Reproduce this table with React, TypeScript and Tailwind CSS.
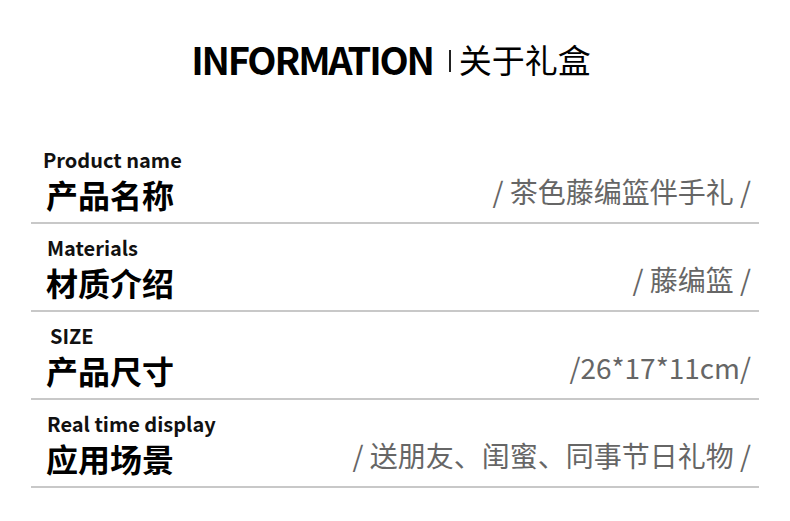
import React from "react";

type Item = {
  en: string;
  zh: string;
  value: string;
  enPad: string;
};

const items: Item[] = [
  { en: "Product name", zh: "产品名称", value: "/ 茶色藤编篮伴手礼 /", enPad: "pl-[12px]" },
  { en: "Materials", zh: "材质介绍", value: "/ 藤编篮 /", enPad: "pl-[16px]" },
  { en: "SIZE", zh: "产品尺寸", value: "/26*17*11cm/", enPad: "pl-[19px]" },
  { en: "Real time display", zh: "应用场景", value: "/ 送朋友、闺蜜、同事节日礼物 /", enPad: "pl-[16px]" },
];

const font = { fontFamily: '"Noto Sans CJK SC", "Noto Sans", sans-serif' };

export default function App() {
  return (
    <div className="w-[790px] h-[521px] bg-white overflow-hidden" style={font}>
      <div className="flex justify-center items-start pt-[36px] pr-[8px] h-[136px]">
        <span className="text-[38px] leading-[46px] font-bold text-black tracking-[-2.2px]">
          INFORMATION
        </span>
        <span className="ml-[16px] mt-[14px] w-[2px] h-[22px] bg-[#222]" />
        <span className="ml-[8px] text-[33px] leading-[46px] text-black">关于礼盒</span>
      </div>

      <div className="mx-[31px]">
        {items.map((it) => (
          <div key={it.en} className="h-[88px] border-b-2 border-[#c8c8c8] flex flex-col">
            <div className={`mt-[12px] text-[20px] leading-[24px] font-semibold text-[#111] ${it.enPad}`}>
              {it.en}
            </div>
            <div className="flex items-end justify-between pl-[15px] pr-[8px] mt-[2px]">
              <span className="text-[32px] leading-[40px] font-bold text-black">{it.zh}</span>
              <span className="text-[28px] leading-[40px] text-[#666] -translate-y-[3px]">{it.value}</span>
            </div>
          </div>
        ))}
      </div>
    </div>
  );
}
